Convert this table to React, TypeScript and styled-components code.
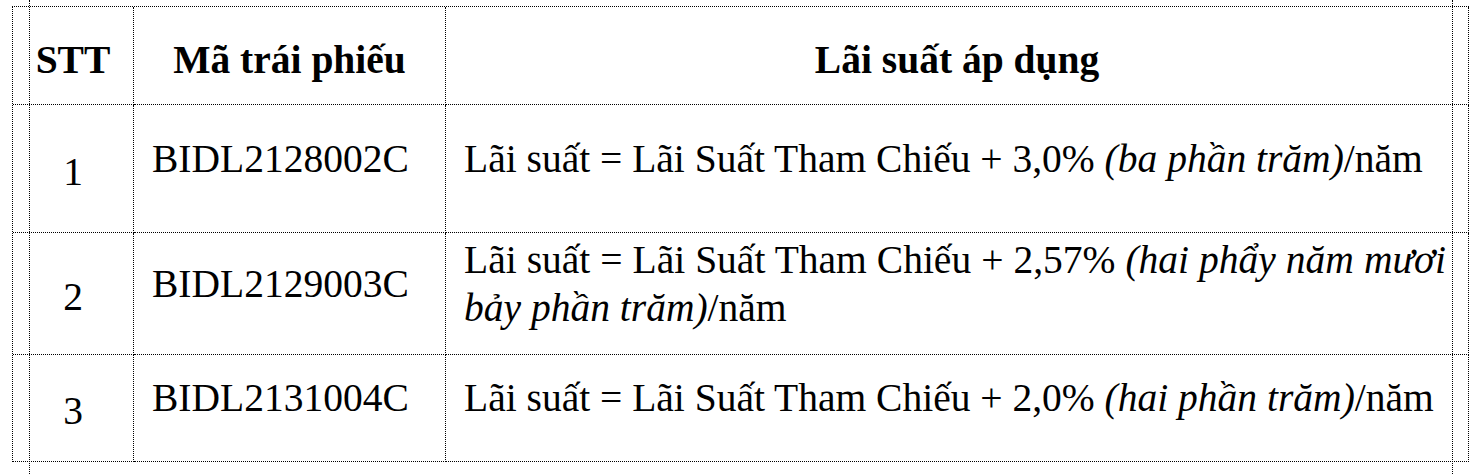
import React from 'react';
import styled, { createGlobalStyle } from 'styled-components';

const GlobalStyle = createGlobalStyle`
  html, body {
    margin: 0;
    padding: 0;
    background: #ffffff;
  }
  body {
    font-family: 'Liberation Serif', 'Times New Roman', serif;
    color: #000000;
  }
`;

// dotted text-boundary guides that run the full page height
const Page = styled.div`
  box-sizing: border-box;
  margin-left: 29px;
  width: 1424px;
  height: 474px;
  padding-top: 6px;
  border-left: 1px dotted #000;
  border-right: 1px dotted #000;
  overflow: visible;
`;

const Table = styled.div`
  display: grid;
  grid-template-columns: 121px 312px 1023px;
  grid-template-rows: 98px 128px 122px 107px;
  width: 1457px;
  margin-left: -18px;
  border-left: 1px dotted #000;
  border-top: 1px dotted #000;
  box-sizing: border-box;
`;

const Cell = styled.div<{ $align?: 'left' | 'center'; $padTop?: number; $padBottom?: number }>`
  box-sizing: border-box;
  border-right: 1px dotted #000;
  border-bottom: 1px dotted #000;
  display: flex;
  align-items: center;
  justify-content: ${(p) => (p.$align === 'left' ? 'flex-start' : 'center')};
  padding-top: ${(p) => p.$padTop ?? 0}px;
  padding-bottom: ${(p) => p.$padBottom ?? 0}px;
  padding-left: ${(p) => (p.$align === 'left' ? 18 : 0)}px;
  padding-right: ${(p) => (p.$align === 'left' ? 22 : 0)}px;
  font-size: 39.5px;
  line-height: 1.2;
  text-align: ${(p) => (p.$align === 'left' ? 'justify' : 'center')};
`;

const HeadCell = styled(Cell)`
  font-weight: bold;
`;

const Text = styled.div`
  width: 100%;
`;

const Note = styled.i`
  font-style: italic;
`;

type Row = { stt: string; code: string; rate: string; note: string };

const rows: Row[] = [
  { stt: '1', code: 'BIDL2128002C', rate: '3,0%', note: 'ba phần trăm' },
  { stt: '2', code: 'BIDL2129003C', rate: '2,57%', note: 'hai phẩy năm mươi bảy phần trăm' },
  { stt: '3', code: 'BIDL2131004C', rate: '2,0%', note: 'hai phần trăm' },
];

export default function App() {
  return (
    <>
      <GlobalStyle />
      <Page>
        <Table>
          <HeadCell $padTop={10}>STT</HeadCell>
          <HeadCell $padTop={10}>Mã trái phiếu</HeadCell>
          <HeadCell $padTop={10}>Lãi suất áp dụng</HeadCell>
          {rows.map((r) => (
            <React.Fragment key={r.stt}>
              <Cell $padTop={8}>{r.stt}</Cell>
              <Cell $align="left" $padBottom={18}>
                {r.code}
              </Cell>
              <Cell $align="left" $padBottom={18}>
                <Text>
                  Lãi suất = Lãi Suất Tham Chiếu + {r.rate} <Note>({r.note})</Note>/năm
                </Text>
              </Cell>
            </React.Fragment>
          ))}
        </Table>
      </Page>
    </>
  );
}
